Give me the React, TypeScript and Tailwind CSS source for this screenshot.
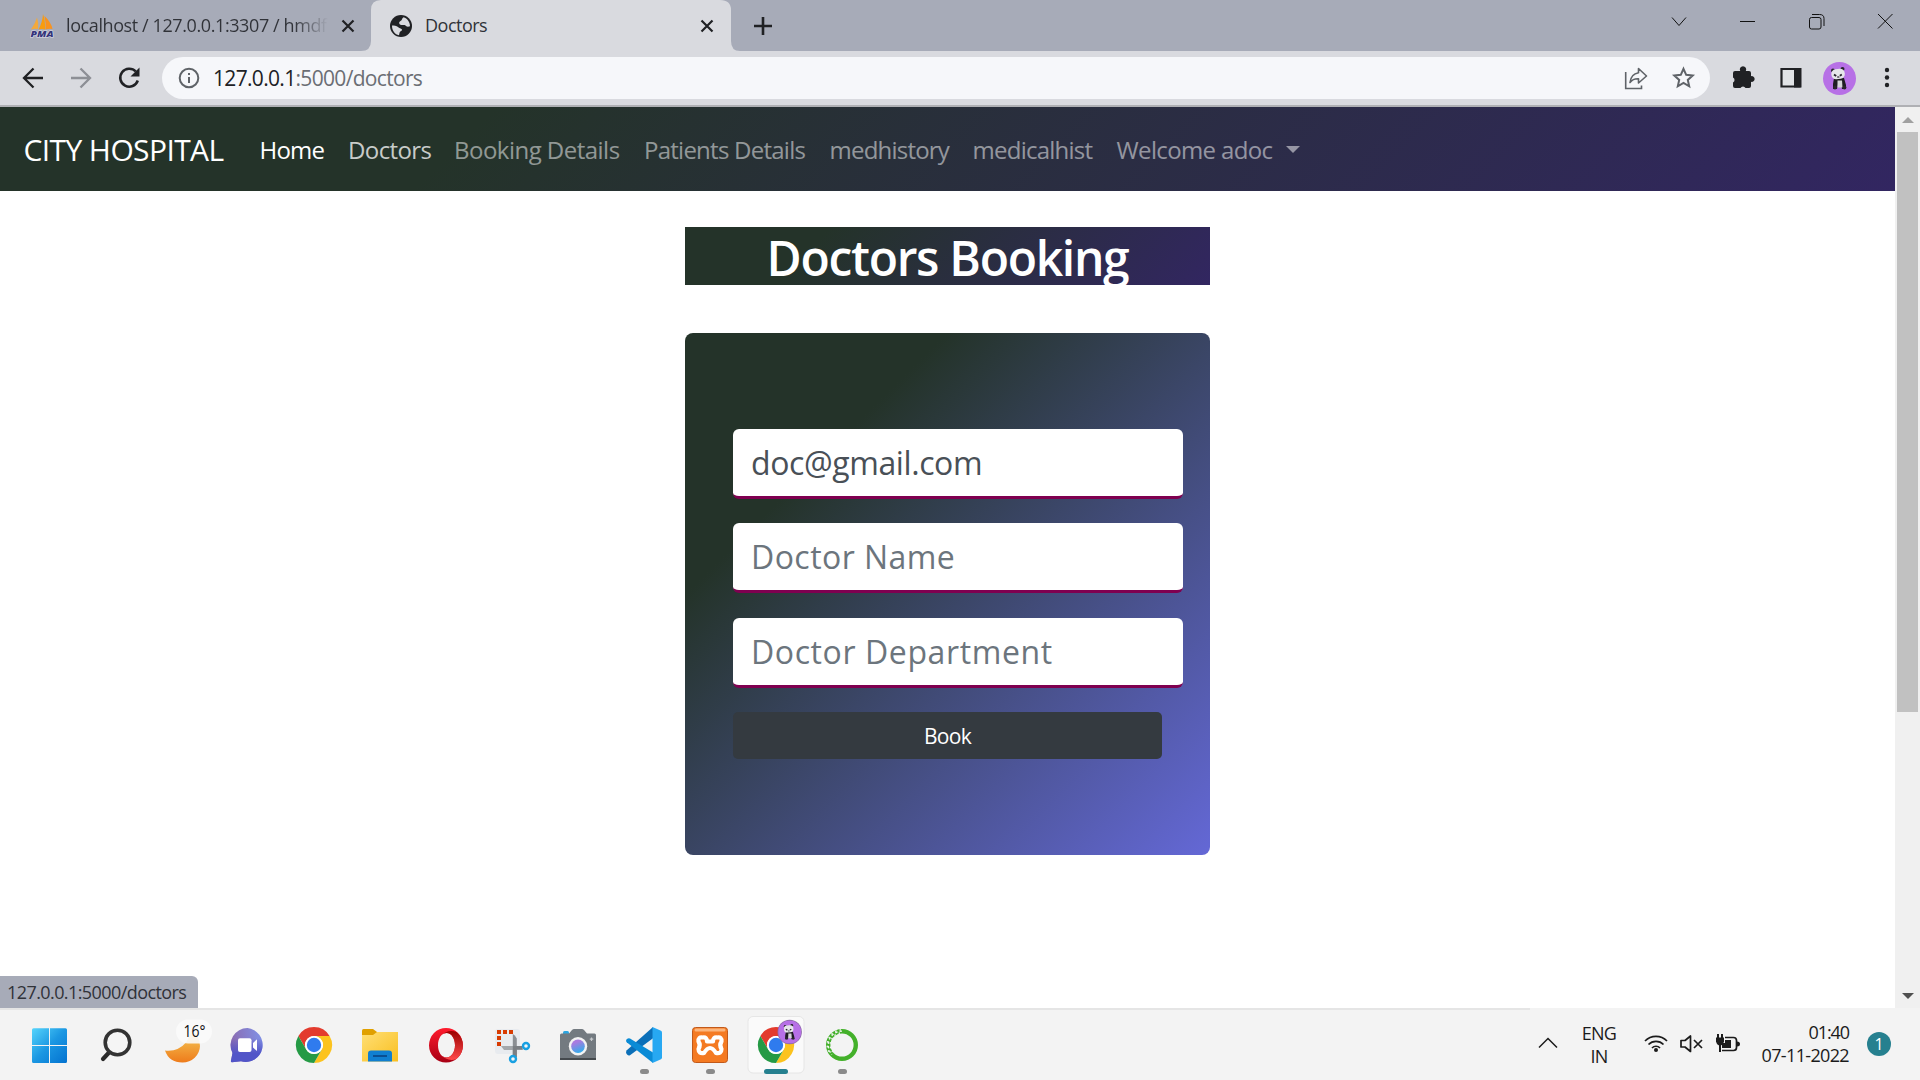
import type { ReactNode } from 'react';

const gradientNav = 'bg-[linear-gradient(135deg,#243329_25%,#322661_100%)]';

function Panda({ className }: { className?: string }) {
  return (
    <svg viewBox="0 0 33 33" className={className}>
      <circle cx="16.5" cy="16.5" r="16.5" fill="#b770e6" />
      <circle cx="10" cy="8.5" r="2" fill="#26232c" />
      <circle cx="19.5" cy="7" r="2" fill="#26232c" />
      <path d="M11 16h10l2 7v4h-4l-1-5h-3l-1 5h-4v-5z" fill="#1f1c22" />
      <path d="M14.5 18.5h4.5l.5 7h-5z" fill="#d6d6d8" />
      <rect x="8.3" y="7" width="13.5" height="10" rx="4.6" fill="#e6e6ea" transform="rotate(-6 15 12)" />
      <path d="M11 12.5l2.2 1.6M18.8 12.5l-2 1.2" stroke="#26232c" strokeWidth="1.8" />
      <path d="M14.2 15h2.2" stroke="#26232c" strokeWidth="1.2" />
      <circle cx="12" cy="25.5" r="1.9" fill="#2a252c" />
      <circle cx="21.5" cy="25.5" r="1.9" fill="#2a252c" />
    </svg>
  );
}

function ChromeMark({ cx, cy }: { cx: number; cy: number }) {
  return (
    <g transform={`translate(${cx} ${cy})`}>
      <path d="M-15.6-9A18 18 0 0 1 15.6-9H0A9 9 0 0 0-7.8 4.5z" fill="#e33b2e" />
      <path d="M15.6-9A18 18 0 0 1 0 18L7.8 4.5A9 9 0 0 0 0-9z" fill="#fcc31e" />
      <path d="M0 18A18 18 0 0 1-15.6-9L-7.8 4.5A9 9 0 0 0 7.8 4.5z" fill="#259a45" />
      <circle r="9" fill="#fff" />
      <circle r="7.2" fill="#2f7bee" />
    </g>
  );
}

function CloseX({ className }: { className?: string }) {
  return (
    <svg viewBox="0 0 14 14" className={className}>
      <path d="M1.5 1.5l11 11M12.5 1.5l-11 11" stroke="#202124" strokeWidth="2.2" />
    </svg>
  );
}

function TabStrip() {
  return (
    <div className="flex h-[51px] items-stretch bg-[#a7abb8]">
      <div className="flex w-[361px] items-center pl-[30px]">
        <svg viewBox="0 0 26 24" className="h-6 w-[26px] shrink-0">
          <path d="M7 3.5Q5.500 9 1 15.500Q5 14.500 8 15Q9 9 7 3.500z" fill="#f3a93c" />
          <path d="M13 0Q12.500 8 8.500 15.500Q12 14.500 15 15.500Q15.500 7 13 0z" fill="#f89c0e" />
          <path d="M14.500 2Q16 9 15.500 15.500Q19 14.500 22.500 15Q21 8 14.500 2z" fill="#f8931f" />
          <text x="0.500" y="23" fontSize="9.500" fontWeight="800" fontStyle="italic" fontFamily="Open Sans, sans-serif" fill="#35357a" stroke="#dcdde8" strokeWidth="1.200" paintOrder="stroke" textLength="23" lengthAdjust="spacingAndGlyphs">PMA</text>
        </svg>
        <div className="ml-2.5 w-[262px] overflow-hidden whitespace-nowrap bg-linear-to-r from-[#303238] from-87% to-transparent bg-clip-text text-[18px] tracking-[-0.4px] text-transparent">
          localhost / 127.0.0.1:3307 / hmdf
        </div>
        <CloseX className="ml-[13px] h-3.5 w-3.5 shrink-0" />
      </div>
      <div className="relative flex w-[379px] items-center pl-[28px]">
        <svg viewBox="0 0 379 51" className="absolute inset-0 h-full w-full">
          <path d="M0 51Q10 51 10 41V10Q10 0 20 0H359Q370 0 370 10V41Q370 51 379 51z" fill="#d9dadf" />
        </svg>
        <svg viewBox="0 0 24 24" className="relative h-6 w-6 shrink-0">
          <circle cx="12" cy="12" r="11" fill="#202124" />
          <path d="M3 11.500c2 0 4.500 0 6 1.500 1 1.300 3 1 4 2.500.5 1.300-2 1.500-2.500 3.500l-.5 2.300C6 20.500 2.800 16.500 3 11.500z" fill="#d9dadf" />
          <path d="M14.500 3.200C12.500 4.200 13.500 6 11.500 7s-1.500 3 0 3.700c2 .8 3.500-.5 5 .8s2.500 1.500 4.500.7C21 8 18.500 4.500 14.500 3.200z" fill="#d9dadf" />
        </svg>
        <span className="relative ml-3 w-[275px] text-[18px] tracking-[-0.5px] text-[#303238]">Doctors</span>
        <CloseX className="relative h-3.5 w-3.5 shrink-0" />
      </div>
      <div className="flex w-12 items-center pl-[14px]">
        <svg viewBox="0 0 18 18" className="h-[18px] w-[18px]">
          <path d="M9 0v18M0 9h18" stroke="#202124" strokeWidth="2.600" />
        </svg>
      </div>
      <div className="flex flex-1 justify-end pr-[27px]">
        <svg viewBox="0 0 222 42" className="h-[42px] w-[222px]" fill="none" stroke="#111" strokeWidth="1">
          <path d="M1 17.500l7 8 7-8" />
          <path d="M69 21.500h15" />
          <rect x="138.500" y="17.500" width="11.500" height="11.500" rx="2" />
          <path d="M141 14.500h7.500q4.500 0 4.500 4v7.500" />
          <path d="M207 14l14.500 14.500M221.500 14l-14.500 14.500" />
        </svg>
      </div>
    </div>
  );
}

function Toolbar() {
  return (
    <div className="flex h-[56px] items-center border-b-2 border-[#afb0b4] bg-[#d9dadf]">
      <svg viewBox="0 0 162 54" className="h-[54px] w-[162px] shrink-0" fill="none" strokeWidth="2.300">
        <path d="M43 27H25M33.500 17.500L24 27l9.500 9.500" stroke="#202124" />
        <path d="M71 27h18M80.500 17.500L90 27l-9.500 9.500" stroke="#8d8f95" />
        <path d="M135.800 20.500A9 9 0 1 0 137.800 29.500" stroke="#202124" strokeWidth="2.500" />
        <path d="M139.500 16.500v9h-9z" fill="#202124" />
      </svg>
      <div className="flex h-[42px] w-[1548px] items-center rounded-full bg-[#f6f7fa] pl-[16px] pr-[14px]">
        <svg viewBox="0 0 22 22" className="h-[22px] w-[22px]" fill="none" stroke="#5f6368" strokeWidth="2">
          <circle cx="11" cy="11" r="9.300" />
          <path d="M11 10v6M11 6v2" />
        </svg>
        <span className="ml-[13px] pt-0.5 text-[21px] tracking-[-0.68px] text-[#202124]">
          127.0.0.1<span className="text-[#6b6e74]">:5000/doctors</span>
        </span>
        <svg viewBox="0 0 72 24" className="ml-auto h-6 w-[72px]" fill="none" stroke="#5f6368" strokeWidth="1.600">
          <path d="M1.700 6v16.500H17.500V19.500" />
          <path d="M14.500 2.500L22.500 10l-8 7v-4.200Q9 12.500 6 16.500 7 8 14.500 6.800z" strokeLinejoin="round" />
          <path d="M59.500 2.800l2.700 6 6.500.7-4.900 4.400 1.400 6.400-5.700-3.300-5.700 3.300 1.400-6.400-4.900-4.400 6.500-.7z" strokeWidth="2" />
        </svg>
      </div>
      <svg viewBox="0 0 80 24" className="ml-[22px] h-6 w-[80px] shrink-0">
        <path d="M4 5h4.200a3.200 3.200 0 1 1 5.600 0H17a2 2 0 0 1 2 2v3.200a2.900 2.900 0 1 1 0 5.600V20a2 2 0 0 1-2 2h-3.500a2.800 2.800 0 0 0-5 0H3a2 2 0 0 1-2-2v-3.500a2.800 2.800 0 0 0 0-5V7a2 2 0 0 1 2-2z" fill="#202124" />
        <path d="M49.500 3h18v17.500h-18z" fill="#f6f7fa" fillOpacity=".3" stroke="#202124" strokeWidth="2.200" />
        <path d="M62 2h7.500v19.500H62z" fill="#202124" />
      </svg>
      <Panda className="ml-[11px] h-[33px] w-[33px] shrink-0" />
      <svg viewBox="0 0 6 22" className="ml-[28px] h-[22px] w-1.5" fill="#202124">
        <circle cx="3" cy="3" r="2.200" />
        <circle cx="3" cy="10.500" r="2.200" />
        <circle cx="3" cy="18" r="2.200" />
      </svg>
    </div>
  );
}

function Navbar() {
  return (
    <nav className={`flex h-[84px] items-center pt-px pl-[23.5px] text-[24px] text-white/50 whitespace-nowrap ${gradientNav}`}>
      <a className="w-[236px] text-[30px] tracking-[-0.6px] text-white">CITY HOSPITAL</a>
      <a className="w-[88.5px] tracking-[-0.8px] text-white">Home</a>
      <a className="w-[106px] tracking-[-0.6px] text-white/75">Doctors</a>
      <a className="w-[190px] tracking-[-0.52px]">Booking Details</a>
      <a className="w-[185.5px] tracking-[-0.75px]">Patients Details</a>
      <a className="w-[143px] tracking-[-0.78px]">medhistory</a>
      <a className="w-[144px] tracking-[-0.75px]">medicalhist</a>
      <a className="w-[169px] tracking-[-0.63px]">Welcome adoc</a>
      <span className="h-0 w-0 border-x-[7.5px] border-t-[7.5px] border-x-transparent border-t-white/50" />
    </nav>
  );
}

function Field({ value, placeholder, className }: { value?: string; placeholder?: string; className: string }) {
  return (
    <input
      readOnly
      value={value ?? ''}
      placeholder={placeholder}
      className={`h-[70px] w-[450px] shrink-0 rounded-md border-b-3 border-[#7f0050] bg-white px-[18px] text-[32px] text-[#495057] outline-none placeholder:text-[#6c757d] ${className}`}
    />
  );
}

function Content() {
  return (
    <main className="h-[817px] bg-white pt-9">
      <div className="mx-auto w-[525px]">
        <h1 className={`h-[58px] text-center text-[48px] leading-[61px] font-[570] tracking-[-1.3px] text-white ${gradientNav}`}>
          Doctors Booking
        </h1>
        <form className="mt-12 flex h-[522px] flex-col items-start gap-[24.3px] rounded-lg bg-[linear-gradient(135deg,#243329_25%,#6468d6_100%)] pt-24 pl-12">
          <Field value="doc@gmail.com" className="tracking-[-0.4px]" />
          <Field placeholder="Doctor Name" className="tracking-[0.45px]" />
          <Field placeholder="Doctor Department" className="tracking-[0.6px]" />
          <button type="button" className="h-[47px] w-[429px] rounded-[5px] bg-[#343a40] pt-0.5 text-[21px] tracking-[-0.7px] text-white">
            Book
          </button>
        </form>
      </div>
    </main>
  );
}

function Scrollbar() {
  return (
    <div className="flex w-[25px] shrink-0 flex-col items-center bg-[#f0f0f0]">
      <div className="flex h-[25px] items-center">
        <span className="border-x-[6px] border-b-[6px] border-x-transparent border-b-[#a0a0a0]" />
      </div>
      <div className="h-[580px] w-[21px] bg-[#c1c1c1]" />
      <div className="mt-auto flex h-[25px] items-center">
        <span className="border-x-[6px] border-t-[6px] border-x-transparent border-t-[#505050]" />
      </div>
    </div>
  );
}

const apps: { name: string; art: ReactNode; running?: boolean }[] = [
  {
    name: 'Start',
    art: (
      <>
        <defs>
          <linearGradient id="win" gradientUnits="userSpaceOnUse" x1="16" y1="20" x2="51" y2="55">
            <stop stopColor="#56d5fc" /><stop offset=".5" stopColor="#1b97e2" /><stop offset="1" stopColor="#0372d0" />
          </linearGradient>
        </defs>
        <path fill="url(#win)" d="M17.500 20.300H33v16.700H16V21.800q0-1.500 1.500-1.500zM34 20.300h15.500q1.500 0 1.500 1.500V37H34zM16 38h17v17H17.500Q16 55 16 53.500zM34 38h17v15.500q0 1.500-1.500 1.500H34z" />
      </>
    ),
  },
  {
    name: 'Search',
    art: (
      <>
        <path d="M27.500 44l-6.500 7" stroke="#2a2a2a" strokeWidth="4.200" strokeLinecap="round" />
        <circle cx="35.500" cy="34.500" r="12.300" fill="#f5f5f5" stroke="#333" strokeWidth="3.600" />
      </>
    ),
  },
  {
    name: 'Weather',
    art: (
      <>
        <defs>
          <linearGradient id="moon" x1="0" y1="0" x2="0" y2="1"><stop stopColor="#f5cf5b" /><stop offset="1" stopColor="#ee7b1b" /></linearGradient>
        </defs>
        <path d="M17 42.500Q30 44 38.500 34Q42 28 43 22Q52 28 52 38A17.500 17 0 0 1 34.500 54.500Q21 54.500 17 42.500z" fill="url(#moon)" />
        <rect x="28" y="11.500" width="36" height="24" rx="12" fill="#fbfbfb" opacity=".9" />
        <text x="35.500" y="29" fontSize="16" fontFamily="Open Sans, sans-serif" fill="#111" textLength="22" lengthAdjust="spacingAndGlyphs">16°</text>
      </>
    ),
  },
  {
    name: 'Chat',
    art: (
      <>
        <defs>
          <linearGradient id="chat" x1="0" y1=".3" x2="1" y2=".1"><stop stopColor="#8b6bb0" /><stop offset="1" stopColor="#7f92e8" /></linearGradient>
          <linearGradient id="chat2" x1="0" y1="0" x2="0" y2="1"><stop offset=".3" stopColor="#4d50c8" stopOpacity="0" /><stop offset=".75" stopColor="#5155c8" /></linearGradient>
        </defs>
        <path d="M33.500 20A16.800 17 0 1 1 27 53.200L18 54.200Q16.500 54 17 52.500L18.500 45A16.800 17 0 0 1 33.500 20z" fill="url(#chat)" />
        <path d="M33.500 20A16.800 17 0 1 1 27 53.200L18 54.200Q16.500 54 17 52.500L18.500 45A16.800 17 0 0 1 33.500 20z" fill="url(#chat2)" />
        <rect x="24" y="30.300" width="13.500" height="13.700" rx="2" fill="#fff" />
        <path d="M39 35l4-3.700v11.700L39 39.500z" fill="#fff" />
      </>
    ),
  },
  { name: 'Chrome', art: <ChromeMark cx={34} cy={37} /> },
  {
    name: 'Files',
    art: (
      <>
        <defs>
          <linearGradient id="dir" x1="0" y1="0" x2="1" y2="1"><stop stopColor="#ffdf76" /><stop offset="1" stopColor="#f9bf1f" /></linearGradient>
        </defs>
        <path d="M16 22.500q0-1.500 1.500-1.500H27l4 3v6H16z" fill="#e0a000" />
        <path d="M16 27h11l4-3H52v29.500H16z" fill="url(#dir)" />
        <path d="M22 53.500V45.500q0-3 3-3h18q3 0 3 3v8z" fill="#107fd0" />
        <path d="M27 48h14" stroke="#0a4f92" strokeWidth="2" />
      </>
    ),
  },
  {
    name: 'Opera',
    art: (
      <>
        <defs>
          <linearGradient id="opl" x1="0" y1="0" x2="0" y2="1"><stop stopColor="#ff1b2d" /><stop offset="1" stopColor="#a70014" /></linearGradient>
          <linearGradient id="opr" x1="0" y1="0" x2="0" y2="1"><stop stopColor="#9c0000" /><stop offset="1" stopColor="#ff4b4b" /></linearGradient>
        </defs>
        <path fillRule="evenodd" fill="url(#opl)" d="M34 20a17 17.300 0 1 1 0 34.600a17 17.300 0 1 1 0-34.600zM34.500 25c-5 0-8.500 5.500-8.500 12.300S29.500 49.500 34.500 49.500 43 44 43 37.300 39.500 25 34.500 25z" />
        <path fill="url(#opr)" d="M28.500 28Q36 21 44.500 24A17 17.300 0 0 1 44.500 51Q36 54 28.500 46.800Q31 49.500 34.500 49.500C39.500 49.500 43 44 43 37.300S39.500 25 34.500 25Q31 25 28.500 28z" />
      </>
    ),
  },
  {
    name: 'Snip',
    art: (
      <>
        <rect x="17" y="21" width="25" height="25" rx="3" fill="#e8ebef" />
        <path d="M19 22h4v4h-4zM25 22h4v4h-4zM31 22h4v4h-4zM19 28h4v4h-4zM19 34h4v4h-4z" fill="#d83b01" />
        <path d="M34.800 26l2 1.500 2 3V49h-4z" fill="#8b8f94" />
        <path d="M23 38h22v4H26z" fill="#a4a8ac" />
        <path d="M34.800 38h4v11h-4zM37 38h7v3.500h-7z" fill="#7b7f84" />
        <circle cx="48" cy="38" r="3" fill="#f5f5f5" stroke="#18a0e2" strokeWidth="2.400" />
        <circle cx="35" cy="51" r="3" fill="#f5f5f5" stroke="#18a0e2" strokeWidth="2.400" />
      </>
    ),
  },
  {
    name: 'Camera',
    art: (
      <>
        <defs>
          <linearGradient id="lens" x1=".3" y1="0" x2=".7" y2="1"><stop offset=".2" stopColor="#a97be0" /><stop offset="1" stopColor="#29b0ec" /></linearGradient>
        </defs>
        <path d="M19 28v-3.500q0-1.500 1.500-1.500h3q1.500 0 1.500 1.500V28z" fill="#2aa5e2" />
        <path d="M16 27q0-1.500 1.500-1.500H25l3-3.500q1-1 2-1h8q1 0 2 1l3 3.500h7.500q1.500 0 1.500 1.500v25H16z" fill="#737a80" />
        <path d="M16 50h36v2H16z" fill="#44494d" />
        <circle cx="34" cy="38.300" r="9.200" fill="#f3f3f3" />
        <circle cx="34" cy="38.300" r="6.800" fill="url(#lens)" />
        <path d="M47.500 29.500v3.500M45.800 31.200h3.500" stroke="#c7cacd" strokeWidth="1.200" />
      </>
    ),
  },
  {
    name: 'Code',
    running: true,
    art: (
      <>
        <path d="M16.500 42.500L43 19v11.300L20 47.300Q18.500 48 17.300 46.800L16.500 45.800Q15.500 44.300 16.500 42.500z" fill="#0b6fb8" />
        <path d="M16.700 34.300Q15.300 33 16.500 31.500L17.300 30.700Q18.500 29.800 20 30.500L43 44.500V55z" fill="#0a8bd6" />
        <path d="M42.500 19L51 22.800Q52 23.300 52 24.500v25Q52 50.700 51 51.200L42.500 55z" fill="#27a8f2" />
      </>
    ),
  },
  {
    name: 'Xampp',
    running: true,
    art: (
      <>
        <rect x="16.500" y="19.500" width="35" height="35" rx="3" fill="#f47a22" stroke="#c1591a" />
        <rect x="18.500" y="20.500" width="31" height="3" rx="1.500" fill="#fbb57d" />
        <path d="M27 29.500Q22 28.500 22.500 33.500 25 37 22.500 41 22.500 46 28 45 31 40 34 40T40 45Q45.500 46 45.500 41 43 37 45.500 33.500 46 28.500 41 29.500 37 29 37 33.500H31Q31 29 27 29.500z" fill="#f47a22" stroke="#fff" strokeWidth="4.200" strokeLinejoin="round" />
      </>
    ),
  },
  {
    name: 'Chrome profile',
    art: (
      <>
        <rect x="6" y="8.500" width="56" height="56.500" rx="5" fill="#fafafa" stroke="#e6e6e6" />
        <ChromeMark cx={34} cy={37} />
        <circle cx="47.700" cy="24" r="12.200" fill="#8e6aa8" />
        <svg x="36.200" y="12.500" width="23" height="23" viewBox="0 0 33 33">
          <Panda />
        </svg>
        <rect x="22" y="61" width="24" height="5" rx="2.500" fill="#26808f" />
      </>
    ),
  },
  {
    name: 'Anaconda',
    running: true,
    art: (
      <>
        <circle cx="34" cy="37" r="13.800" fill="none" stroke="#43b02a" strokeWidth="4.400" />
        <path d="M34 23.200A13.800 13.800 0 0 0 24 46.500" fill="none" stroke="#f3f3f3" strokeWidth="1.300" strokeDasharray="2.500 2" />
        <path d="M33 21.800A15.200 15.200 0 0 0 21.500 45M32 25A12 12 0 0 0 24.500 44" fill="none" stroke="#f3f3f3" strokeWidth="1.300" strokeDasharray="1.600 3" />
      </>
    ),
  },
];

function Taskbar() {
  return (
    <div className="flex h-[72px] items-stretch bg-[#f3f3f3] text-[18px] text-[#1b1b1b]">
      <div className="flex w-[1530px] border-t-2 border-[#e5e5e5] pl-4">
        {apps.map((app) => (
          <svg key={app.name} viewBox="0 0 66 72" className="-mt-0.5 h-[72px] w-[66px] shrink-0">
            {app.art}
            {app.running && <rect x="30" y="61" width="9" height="5" rx="2.500" fill="#8a8a8a" />}
          </svg>
        ))}
      </div>
      <svg viewBox="0 0 36 72" className="h-[72px] w-9" fill="none" stroke="#1b1b1b" strokeWidth="1.500">
        <path d="M9 39.500l9-9 9 9" />
      </svg>
      <div className="flex w-[66px] flex-col items-center pt-[14px] leading-[23px] tracking-[-0.7px]">
        <span>ENG</span>
        <span>IN</span>
      </div>
      <svg viewBox="1632 1008 117 72" className="h-[72px] w-[117px]" fill="none" stroke="#1b1b1b" strokeWidth="1.700">
        <path d="M1645 1041a15.500 15.500 0 0 1 22 0M1648.500 1044.500a10.500 10.500 0 0 1 15 0M1652 1048a5.500 5.500 0 0 1 8 0" />
        <circle cx="1656" cy="1050" r="2" fill="#1b1b1b" stroke="none" />
        <path d="M1681 1040.500h4l5.500-4.500v15.500l-5.500-4.500h-4z" strokeLinejoin="round" />
        <path d="M1694 1040l8 8M1702 1040l-8 8" />
        <path d="M1725 1037.500h8.500q3 0 3 3v7q0 3-3 3H1722" />
        <path d="M1737 1041.500q3 0 3 2.500t-3 2.500z" fill="#1b1b1b" stroke="none" />
        <path d="M1722 1043h3v-3h6v8h-9z" fill="#1b1b1b" stroke="none" />
        <path d="M1718 1034v4M1722 1034v4M1720 1045v7" strokeWidth="2" />
        <path d="M1716 1037.500h8v4q-1 4-4 4t-4-4z" fill="#1b1b1b" stroke="none" />
      </svg>
      <div className="flex w-[101px] flex-col items-end pt-[13px] leading-[23px] whitespace-nowrap">
        <span className="mr-px tracking-[-1.1px]">01:40</span>
        <span className="mr-px tracking-[-0.65px]">07-11-2022</span>
      </div>
      <div className="flex w-[58px] items-center justify-center">
        <span className="flex h-6 w-6 items-center justify-center rounded-full bg-[#26808f] text-[16px] text-white">1</span>
      </div>
    </div>
  );
}

export default function App() {
  return (
    <div className="flex h-[1080px] w-[1920px] flex-col overflow-hidden bg-white font-['Open_Sans',sans-serif]">
      <TabStrip />
      <Toolbar />
      <div className="relative flex h-[901px]">
        <div className="flex-1">
          <Navbar />
          <Content />
        </div>
        <Scrollbar />
        <div className="absolute bottom-0 left-0 flex h-[32px] w-[198px] items-center rounded-tr-md bg-[#a7abb8] pl-[7px] text-[18px] tracking-[-0.58px] text-[#303238]">
          127.0.0.1:5000/doctors
        </div>
      </div>
      <Taskbar />
    </div>
  );
}
